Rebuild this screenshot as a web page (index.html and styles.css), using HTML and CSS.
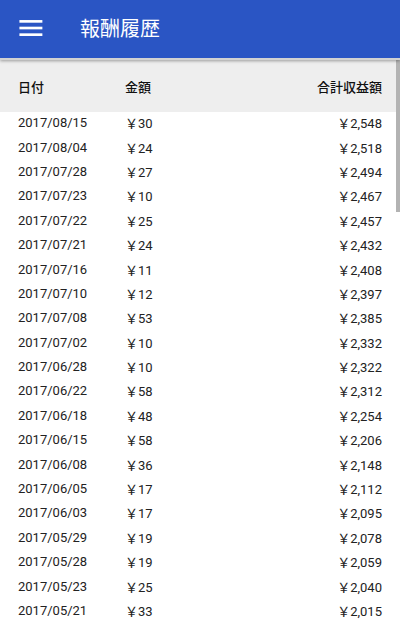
FILE: index.html
```html
<!DOCTYPE html>
<html lang="ja">
<head>
<meta charset="utf-8">
<link rel="stylesheet" href="styles.css">
</head>
<body>
<header class="appbar">
  <svg class="menu" viewBox="0 0 24 24" width="24" height="24"><rect x="2" y="5" width="19" height="2.2" fill="#fff"/><rect x="2" y="10.5" width="19" height="2.2" fill="#fff"/><rect x="2" y="16" width="19" height="2.2" fill="#fff"/></svg>
  <h1 class="title">報酬履歴</h1>
</header>
<div class="thead">
  <span class="c-date">日付</span>
  <span class="c-amt">金額</span>
  <span class="c-total">合計収益額</span>
</div>
<div class="tbody">
  <div class="row"><span class="c-date">2017/08/15</span><span class="c-amt">￥30</span><span class="c-total">￥2,548</span></div>
  <div class="row"><span class="c-date">2017/08/04</span><span class="c-amt">￥24</span><span class="c-total">￥2,518</span></div>
  <div class="row"><span class="c-date">2017/07/28</span><span class="c-amt">￥27</span><span class="c-total">￥2,494</span></div>
  <div class="row"><span class="c-date">2017/07/23</span><span class="c-amt">￥10</span><span class="c-total">￥2,467</span></div>
  <div class="row"><span class="c-date">2017/07/22</span><span class="c-amt">￥25</span><span class="c-total">￥2,457</span></div>
  <div class="row"><span class="c-date">2017/07/21</span><span class="c-amt">￥24</span><span class="c-total">￥2,432</span></div>
  <div class="row"><span class="c-date">2017/07/16</span><span class="c-amt">￥11</span><span class="c-total">￥2,408</span></div>
  <div class="row"><span class="c-date">2017/07/10</span><span class="c-amt">￥12</span><span class="c-total">￥2,397</span></div>
  <div class="row"><span class="c-date">2017/07/08</span><span class="c-amt">￥53</span><span class="c-total">￥2,385</span></div>
  <div class="row"><span class="c-date">2017/07/02</span><span class="c-amt">￥10</span><span class="c-total">￥2,332</span></div>
  <div class="row"><span class="c-date">2017/06/28</span><span class="c-amt">￥10</span><span class="c-total">￥2,322</span></div>
  <div class="row"><span class="c-date">2017/06/22</span><span class="c-amt">￥58</span><span class="c-total">￥2,312</span></div>
  <div class="row"><span class="c-date">2017/06/18</span><span class="c-amt">￥48</span><span class="c-total">￥2,254</span></div>
  <div class="row"><span class="c-date">2017/06/15</span><span class="c-amt">￥58</span><span class="c-total">￥2,206</span></div>
  <div class="row"><span class="c-date">2017/06/08</span><span class="c-amt">￥36</span><span class="c-total">￥2,148</span></div>
  <div class="row"><span class="c-date">2017/06/05</span><span class="c-amt">￥17</span><span class="c-total">￥2,112</span></div>
  <div class="row"><span class="c-date">2017/06/03</span><span class="c-amt">￥17</span><span class="c-total">￥2,095</span></div>
  <div class="row"><span class="c-date">2017/05/29</span><span class="c-amt">￥19</span><span class="c-total">￥2,078</span></div>
  <div class="row"><span class="c-date">2017/05/28</span><span class="c-amt">￥19</span><span class="c-total">￥2,059</span></div>
  <div class="row"><span class="c-date">2017/05/23</span><span class="c-amt">￥25</span><span class="c-total">￥2,040</span></div>
  <div class="row"><span class="c-date">2017/05/21</span><span class="c-amt">￥33</span><span class="c-total">￥2,015</span></div>
</div>
<div class="scrollbar"></div>
</body>
</html>
```
FILE: styles.css
```css
html, body {
  margin: 0;
  padding: 0;
  width: 400px;
  height: 626px;
  overflow: hidden;
  background: #fff;
  font-family: Roboto, "Noto Sans CJK JP", sans-serif;
  color: #222;
}
.appbar {
  position: relative;
  z-index: 2;
  height: 58px;
  background: #2a55c4;
  display: flex;
  align-items: center;
  box-shadow: 0 1px 3px rgba(0,0,0,0.35);
  border-bottom: 2px solid #d2d2d2;
}
.menu {
  width: 29px;
  height: 29px;
  margin-left: 17px;
  margin-top: -1px;
}
.title {
  margin: 0 0 0 34px;
  font-size: 20px;
  font-weight: 400;
  color: #fff;
  font-family: "Noto Sans CJK JP", sans-serif;
  line-height: 1;
  margin-top: -2px;
}
.thead {
  height: 52px;
  background: #eeeeee;
  display: flex;
  align-items: center;
  padding: 0 18px;
  font-size: 13px;
  font-weight: 500;
  color: #111;
  font-family: "Noto Sans CJK JP", sans-serif;
}
.tbody {
  margin-top: -1.5px;
}
.row {
  height: 24.4px;
  display: flex;
  align-items: center;
  padding: 0 18px;
  font-size: 13px;
  color: #222;
}
.c-date {
  width: 107px;
}
.c-amt {
  flex: 1;
}
.c-total {
  text-align: right;
}
.scrollbar {
  position: absolute;
  right: 0;
  top: 60px;
  width: 4px;
  height: 152px;
  background: #b3b3b3;
}
```
